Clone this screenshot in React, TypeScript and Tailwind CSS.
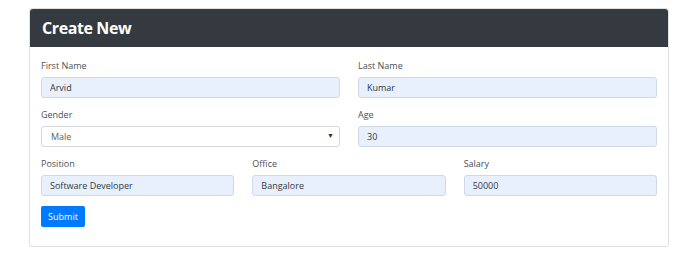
const labelCls = "block text-[9px] leading-[13px] text-[#495057] mb-[5px]";
const inputCls =
  "block w-full h-[21px] rounded-[3px] border border-[#cfd8e6] bg-[#e8f0fe] px-[8px] text-[9px] text-[#303840] outline-none";

function Field({ label, value }: { label: string; value: string }) {
  return (
    <div className="mb-[10px]">
      <label className={labelCls}>{label}</label>
      <input className={inputCls} defaultValue={value} />
    </div>
  );
}

export default function App() {
  return (
    <div
      className="min-h-screen bg-white pt-[8px] pl-[29px]"
      style={{ fontFamily: '"Open Sans", "Noto Sans", sans-serif' }}
    >
      <div className="w-[640px] rounded-[3px] border border-[#e0e0e0]">
        <div className="flex h-[38px] items-center rounded-t-[3px] bg-[#343a40] px-[12px]">
          <h1 className="text-[16px] font-bold tracking-[-0.4px] text-white">Create New</h1>
        </div>
        <div className="px-[11px] pt-[12px] pb-[19px]">
          <div className="grid grid-cols-2 gap-x-[18px]">
            <Field label="First Name" value="Arvid" />
            <Field label="Last Name" value="Kumar" />
            <div className="mb-[10px]">
              <label className={labelCls}>Gender</label>
              <div className="relative flex h-[21px] items-center rounded-[3px] border border-[#d6d9dc] bg-white px-[9px] text-[9px] text-[#5a6168]">
                Male
                <span className="absolute right-[5px] top-[4px] text-[7px] text-[#333]">▼</span>
              </div>
            </div>
            <Field label="Age" value="30" />
          </div>
          <div className="grid grid-cols-3 gap-x-[18px]">
            <Field label="Position" value="Software Developer" />
            <Field label="Office" value="Bangalore" />
            <Field label="Salary" value="50000" />
          </div>
          <button className="block h-[21px] w-[44px] rounded-[2px] bg-[#007bff] text-[9px] text-white">
            Submit
          </button>
        </div>
      </div>
    </div>
  );
}
